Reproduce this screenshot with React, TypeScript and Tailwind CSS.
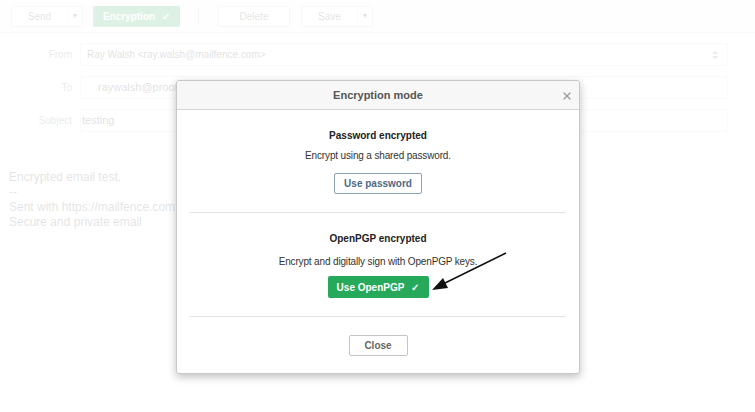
import { X } from "lucide-react"

function ToolbarButton({ label, caret, width }: { label: string; caret?: boolean; width: string }) {
  return <div className={`${width} h-[21px] flex items-center border border-[#cfcfcf] rounded-[2px] bg-white text-[#555]`}>
    <span className="flex-1 text-center">{label}</span>
    {caret && <span className="w-[15px] border-l border-[#ddd] text-center text-[7px]">▼</span>}
  </div>
}

function FormRow({ label, children }: { label: string; children: React.ReactNode }) {
  return <div className="flex items-center h-[23px]">
    <div className="w-[73px] text-right pr-[1px] text-[#777]">{label}</div>
    <div className="ml-[7px] w-[648px] h-[23px] border border-[#ddd] flex items-center px-[6px] text-[#444]">
      {children}
    </div>
  </div>
}

export default function App() {
  return <div className="relative w-[755px] h-[412px] bg-white overflow-hidden text-[10px] font-['Liberation_Sans',Arial,sans-serif]">
    {/* page behind the dialog */}
    <div className="h-[33px] flex items-center pl-[11px] border-b border-[#ddd] bg-[#f8f8f8]">
      <ToolbarButton label="Send" caret width="w-[72px]" />
      <div className="ml-[10px] w-[87px] h-[21px] flex items-center justify-center gap-[7px] rounded-[2px] bg-[#2aa85c] text-white font-bold">
        Encryption <span>✓</span>
      </div>
      <div className="ml-[18px] w-px h-[20px] bg-[#ccc]" />
      <div className="ml-[19px]"><ToolbarButton label="Delete" width="w-[72px]" /></div>
      <div className="ml-[11px]"><ToolbarButton label="Save" caret width="w-[72px]" /></div>
    </div>

    <div className="flex flex-col gap-[10px] pt-[10px]">
      <FormRow label="From">
        <span className="flex-1">Ray Walsh &lt;ray.walsh@mailfence.com&gt;</span>
        <svg width="6" height="10" viewBox="0 0 6 10" className="mr-[3px]">
          <path d="M0 4 L3 1 L6 4Z M0 6 L3 9 L6 6Z" fill="#888" />
        </svg>
      </FormRow>
      <FormRow label="To">
        <span className="ml-[11px] text-[11px]">raywalsh@proot</span>
      </FormRow>
      <FormRow label="Subject">
        <span className="-ml-[5px] text-[11px]">testing</span>
      </FormRow>
    </div>

    <div className="mt-[38px] pl-[9px] text-[12px] leading-[15px] text-[#555]">
      <p>Encrypted email test.</p>
      <p>--</p>
      <p>Sent with https://mailfence.com</p>
      <p>Secure and private email</p>
    </div>

    {/* backdrop */}
    <div className="absolute inset-0 bg-white/[0.84]" />

    {/* dialog */}
    <div className="absolute left-[176px] top-[80px] w-[404px] bg-white border border-[#c8c8c8] rounded-[3px] shadow-[0_3px_8px_rgba(0,0,0,0.25)]">
      <div className="h-[29px] flex items-center justify-center relative bg-[#f7f7f7] border-b border-[#d4d4d4] rounded-t-[3px]">
        <span className="font-bold text-[#555] text-[11px]">Encryption mode</span>
        <X className="absolute right-[6px] top-[9px] text-[#999]" size={12} strokeWidth={2.5} />
      </div>

      <div className="px-[13px] leading-[15px]">
        <div className="flex flex-col items-center pt-[18px] pb-[18px] border-b border-[#e2e2e2]">
          <div className="font-bold text-[#222]">Password encrypted</div>
          <div className="mt-[5px] text-[#333] tracking-[-0.15px]">Encrypt using a shared password.</div>
          <div className="mt-[10px] h-[21px] w-[88px] flex items-center justify-center border border-[#8ca0b3] rounded-[2px] font-bold text-[#4d6a86]">Use password</div>
        </div>

        <div className="flex flex-col items-center pt-[18px] pb-[18px] border-b border-[#e2e2e2]">
          <div className="font-bold text-[#222]">OpenPGP encrypted</div>
          <div className="mt-[8px] text-[#333] tracking-[-0.15px]">Encrypt and digitally sign with OpenPGP keys.</div>
          <div className="mt-[7px] h-[22px] w-[101px] flex items-center justify-center gap-[7px] bg-[#27a95b] rounded-[2px] font-bold text-white">
            Use OpenPGP <span>✓</span>
          </div>
        </div>

        <div className="flex justify-center pt-[18px] pb-[17px]">
          <div className="h-[21px] w-[59px] flex items-center justify-center border border-[#c4c4c4] rounded-[2px] font-bold text-[#666]">Close</div>
        </div>
      </div>
    </div>

    {/* arrow annotation */}
    <svg className="absolute left-[425px] top-[248px]" width="90" height="50" viewBox="0 0 90 50">
      <line x1="81" y1="5" x2="18" y2="36" stroke="#111" strokeWidth="1.6" />
      <polygon points="7,42 18,30 23,40" fill="#111" />
    </svg>
  </div>
}
